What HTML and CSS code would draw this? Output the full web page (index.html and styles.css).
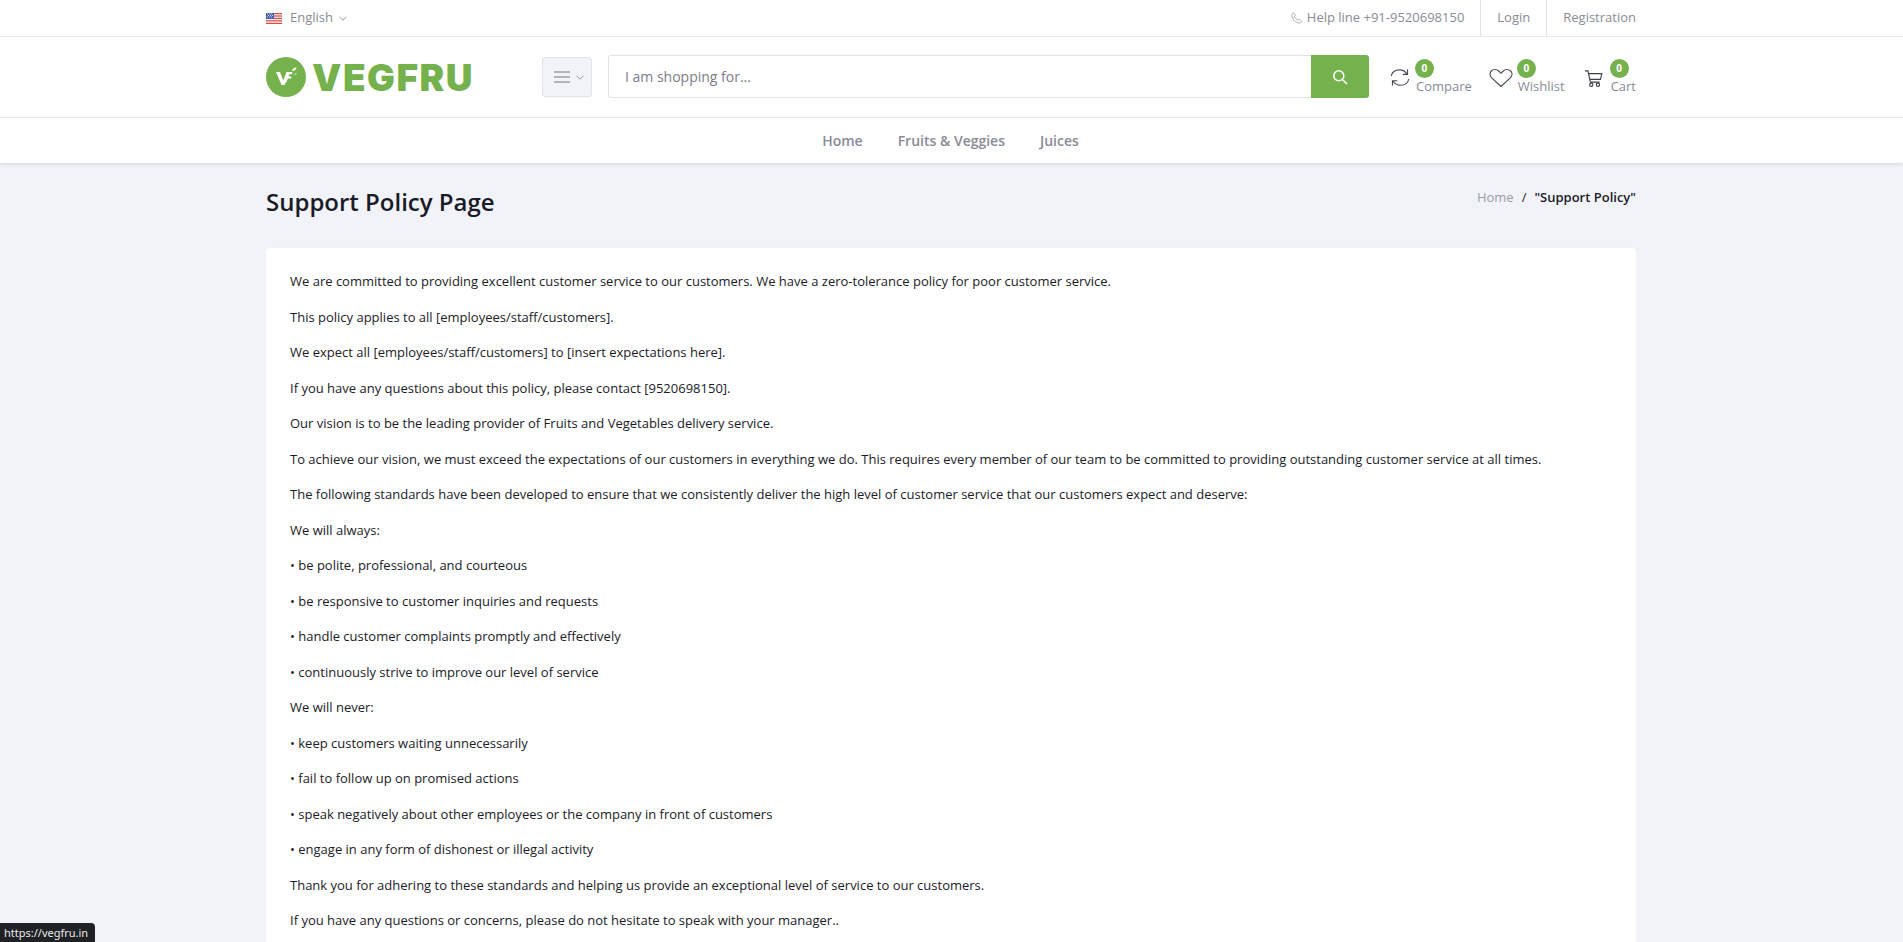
FILE: index.html
```html
<!DOCTYPE html>
<html lang="en">
<head>
<meta charset="utf-8">
<title>Support Policy Page</title>
<link rel="stylesheet" href="styles.css">
</head>
<body>
<header class="site-header">
  <div class="topbar">
    <div class="container topbar-inner">
      <div class="lang">
        <svg class="flag" viewBox="0 0 16 11" width="16" height="11" aria-hidden="true">
          <rect width="16" height="11" fill="#f4f4f6"/>
          <rect width="16" height="1.2" fill="#e0483e"/>
          <rect y="2.4" width="16" height="1.2" fill="#e0483e"/>
          <rect y="4.8" width="16" height="1.2" fill="#e0483e"/>
          <rect y="7.2" width="16" height="1.2" fill="#e0483e"/>
          <rect y="9.8" width="16" height="1.2" fill="#e0483e"/>
          <rect width="8" height="6" fill="#4a5fb0"/>
          <path d="M1 1h1M3 1h1M5 1h1M2 2.5h1M4 2.5h1M6 2.5h1M1 4h1M3 4h1M5 4h1" stroke="#fff" stroke-width=".7"/>
        </svg>
        <span>English</span>
        <svg class="chev" viewBox="0 0 8 5" width="8" height="5" aria-hidden="true"><path d="M.5.7 4 4.2 7.5.7" fill="none" stroke="#8b8b96" stroke-width=".9"/></svg>
      </div>
      <div class="top-right">
        <div class="helpline">
          <svg viewBox="0 0 12 12" width="12" height="12" aria-hidden="true"><path d="M2.6.8 4.4 3 3.5 4.3c.6 1.700 2 3.100 3.700 3.900l1.300-1 2.200 1.900c-.3 1.200-1.300 2-2.400 1.900C4.500 10.600 1.200 7 .8 3.300.7 2.200 1.500 1.100 2.600.8Z" fill="none" stroke="#9a9aa4" stroke-width=".8"/></svg>
          <span>Help line +91-9520698150</span>
        </div>
        <a class="top-link" href="#">Login</a>
        <a class="top-link" href="#">Registration</a>
      </div>
    </div>
  </div>

  <div class="mainbar">
    <div class="container mainbar-inner">
      <a class="logo" href="#">
        <svg class="logo-mark" viewBox="0 0 40 40" width="40" height="40" aria-hidden="true">
          <circle cx="20" cy="20" r="20" fill="#75b24d"/>
          <path d="M10 15h4l3.300 8.500L20.500 15h2.300L18.700 28h-3.100Z" fill="#fff"/>
          <path d="M21 15h5.500l-.7 2.200H23.200l-.6 2.200h3l-.7 2h-3l-1.600 4.200h-1.400Z" fill="#fff"/>
          <path d="M26 14c.5-2 2-3.300 4.500-3.700-.2 2.300-1.700 3.600-4.500 3.700ZM27.500 17.500c1.200-.9 2.300-1.200 3.500-1.100-.8 1-2 1.400-3.500 1.100Z" fill="#fff"/>
        </svg>
        <span class="logo-text">VEGFRU</span>
      </a>
      <button class="cat-btn" type="button" aria-label="Categories">
        <svg viewBox="0 0 16 12" width="16" height="12" aria-hidden="true"><path d="M0 1h16M0 6h16M0 11h16" stroke="#77777f" stroke-width="1.200"/></svg>
        <svg viewBox="0 0 8 5" width="8" height="5" aria-hidden="true"><path d="M.5.7 4 4.200 7.500.7" fill="none" stroke="#8b8b96" stroke-width=".9"/></svg>
      </button>
      <form class="search">
        <div class="search-input">I am shopping for...</div>
        <button class="search-btn" type="button" aria-label="Search">
          <svg viewBox="0 0 16 16" width="16" height="16" aria-hidden="true"><circle cx="6.800" cy="6.800" r="5" fill="none" stroke="#fff" stroke-width="1.500"/><path d="m10.500 10.500 4.500 4.500" stroke="#fff" stroke-width="1.500"/></svg>
        </button>
      </form>
      <div class="actions">
        <a class="action action-compare" href="#">
          <svg viewBox="0 0 20 20" width="20" height="21" aria-hidden="true"><path d="M1.200 8.500C2 4.800 5.300 2.300 9.500 2.300c3.300 0 5.800 1.500 7.500 4.200M17.500 2v4.800h-4.800M18.800 11.500c-.8 3.700-4.100 6.200-8.300 6.200-3.300 0-5.800-1.500-7.500-4.200M2.500 18v-4.800h4.800" fill="none" stroke="#4a4a55" stroke-width="1.150"/></svg>
          <span class="action-text"><span class="badge">0</span><span class="action-label">Compare</span></span>
        </a>
        <a class="action action-wish" href="#">
          <svg viewBox="0 0 24 20" width="24" height="20" aria-hidden="true"><path d="M12 18.500 2.700 9.800C.5 7.600.6 4.700 2.300 3c2-2 5.500-2 7.400 0L12 5.300 14.300 3c1.900-2 5.400-2 7.400 0 1.700 1.700 1.800 4.600-.4 6.800Z" fill="none" stroke="#4a4a55" stroke-width="1.150"/></svg>
          <span class="action-text"><span class="badge">0</span><span class="action-label">Wishlist</span></span>
        </a>
        <a class="action action-cart" href="#">
          <svg class="cart-icon" viewBox="0 0 20 19" width="19" height="17" aria-hidden="true"><path d="M.5 1h3.300l2.700 12.500h10.300M4.500 4h14.800l-1.500 6.500H6" fill="none" stroke="#3f3f4a" stroke-width="1.250"/><circle cx="7.500" cy="16.500" r="1.800" fill="none" stroke="#3f3f4a" stroke-width="1.250"/><circle cx="15" cy="16.500" r="1.800" fill="none" stroke="#3f3f4a" stroke-width="1.250"/></svg>
          <span class="action-text"><span class="badge">0</span><span class="action-label">Cart</span></span>
        </a>
      </div>
    </div>
  </div>

  <nav class="navbar">
    <a href="#">Home</a>
    <a href="#">Fruits &amp; Veggies</a>
    <a href="#">Juices</a>
  </nav>
</header>

<main class="container">
  <div class="page-title">
    <h1>Support Policy Page</h1>
    <ul class="crumbs">
      <li class="crumb-home">Home</li>
      <li class="crumb-sep">/</li>
      <li class="crumb-current">"Support Policy"</li>
    </ul>
  </div>
  <section class="card">
    <p>We are committed to providing excellent customer service to our customers. We have a zero-tolerance policy for poor customer service.</p>
    <p>This policy applies to all [employees/staff/customers].</p>
    <p>We expect all [employees/staff/customers] to [insert expectations here].</p>
    <p>If you have any questions about this policy, please contact [9520698150].</p>
    <p>Our vision is to be the leading provider of Fruits and Vegetables delivery service.</p>
    <p>To achieve our vision, we must exceed the expectations of our customers in everything we do. This requires every member of our team to be committed to providing outstanding customer service at all times.</p>
    <p>The following standards have been developed to ensure that we consistently deliver the high level of customer service that our customers expect and deserve:</p>
    <p>We will always:</p>
    <p>• be polite, professional, and courteous</p>
    <p>• be responsive to customer inquiries and requests</p>
    <p>• handle customer complaints promptly and effectively</p>
    <p>• continuously strive to improve our level of service</p>
    <p>We will never:</p>
    <p>• keep customers waiting unnecessarily</p>
    <p>• fail to follow up on promised actions</p>
    <p>• speak negatively about other employees or the company in front of customers</p>
    <p>• engage in any form of dishonest or illegal activity</p>
    <p>Thank you for adhering to these standards and helping us provide an exceptional level of service to our customers.</p>
    <p>If you have any questions or concerns, please do not hesitate to speak with your manager..</p>
  </section>
</main>

<div class="status-tip">https://vegfru.in</div>
</body>
</html>
```

FILE: styles.css
```css
* { box-sizing: border-box; }
html { overflow: hidden; }
body {
  margin: 0;
  background: #f1f3f8;
  color: #1b1b28;
  font-family: "Open Sans", sans-serif;
  font-size: 13px;
  line-height: 1.5;
}
a { color: inherit; text-decoration: none; }
.container { width: 1400px; margin: 0 0 0 251px; padding: 0 15px; }

.site-header { background: #fff; box-shadow: 0 1px 4px rgba(30, 30, 60, .14); }

.topbar { height: 37px; border-bottom: 1px solid #eaeaee; color: #8b8b96; font-size: 13px; }
.topbar-inner { display: flex; justify-content: space-between; align-items: stretch; height: 36px; }
.lang { display: flex; align-items: center; gap: 8px; }
.lang .chev { margin-left: -2px; margin-top: 1px; }
.flag { display: block; }
.top-right { display: flex; align-items: stretch; }
.helpline { display: flex; align-items: center; gap: 4px; padding-right: 16px; }
.top-link { display: flex; align-items: center; padding: 0 0 0 16px; border-left: 1px solid #e2e3ea; }
.top-link + .top-link { margin-left: 16px; }

.mainbar { height: 81px; border-bottom: 1px solid #eaeaee; }
.mainbar-inner { display: flex; align-items: center; height: 80px; }
.logo { display: flex; align-items: center; gap: 6px; width: 276px; }
.logo-mark { flex: none; }
.logo-text { font-family: Inter, sans-serif; font-weight: 900; font-size: 37px; line-height: 1; letter-spacing: 1.5px; color: #75b24d; }

.cat-btn {
  flex: none;
  display: flex; align-items: center; justify-content: center; gap: 6px;
  width: 50px; height: 40px; padding: 0 0 0 3px;
  background: #f1f3f8;
  border: 1px solid #e2e3ea; border-radius: 3px;
}
.search { flex: none; display: flex; width: 761px; height: 43px; margin: 0 0 1px 16px; }
.search-input {
  flex: 1;
  display: flex; align-items: center;
  padding-left: 16px;
  border: 1px solid #e2e3ea; border-right: 0; border-radius: 3px 0 0 3px;
  color: #7d7d88; font-size: 14px;
}
.search-btn {
  flex: none;
  display: flex; align-items: center; justify-content: center;
  width: 58px; padding: 0;
  background: #75b24d; border: 0; border-radius: 0 3px 3px 0;
}
.actions { display: flex; flex: 1; justify-content: flex-end; align-items: center; }
.action { display: flex; align-items: center; gap: 7px; color: #8b8b96; }
.action-compare { margin-right: 17px; gap: 5px; }
.action-wish { margin-right: 19px; gap: 4px; }
.action svg { flex: none; margin-top: 1px; }
.action .cart-icon { margin-top: 3px; }
.action-text { display: flex; flex-direction: column; align-items: flex-start; margin-bottom: 2px; }
.badge {
  width: 19px; height: 19px; border-radius: 50%;
  background: #75b24d; color: #fff;
  font-size: 10px; font-weight: 700; line-height: 19px; text-align: center;
}
.action-label { font-size: 13px; line-height: 14px; margin-top: 1px; margin-left: 1px; }

.navbar { display: flex; justify-content: center; gap: 35px; height: 45px; align-items: center; padding-right: 2px; color: #8b8b96; font-size: 14px; font-weight: 600; }

.page-title { display: flex; justify-content: space-between; align-items: flex-start; padding-top: 21px; height: 85px; }
h1 { margin: 0; font-size: 24px; font-weight: 600; line-height: 36px; color: #1b1b28; }
.crumbs { display: flex; gap: 8px; margin: 4px 0 0; padding: 0; list-style: none; font-size: 13px; line-height: 18px; }
.crumb-home { color: #9b9ba6; }
.crumb-current { font-weight: 600; color: #1b1b28; }

.card { background: #fff; border-radius: 4px; padding: 24px 24px 24px; box-shadow: 0 0 1px rgba(30, 30, 60, .05); }
.card p { margin: 0 0 16px; }

.status-tip {
  position: fixed; left: 0; bottom: 0;
  padding: 0 7px 0 4px; height: 19px;
  background: #202124; color: #e8eaed;
  border-radius: 0 4px 0 0;
  font-family: "Noto Sans", sans-serif; font-size: 11px; line-height: 19px;
}
```
